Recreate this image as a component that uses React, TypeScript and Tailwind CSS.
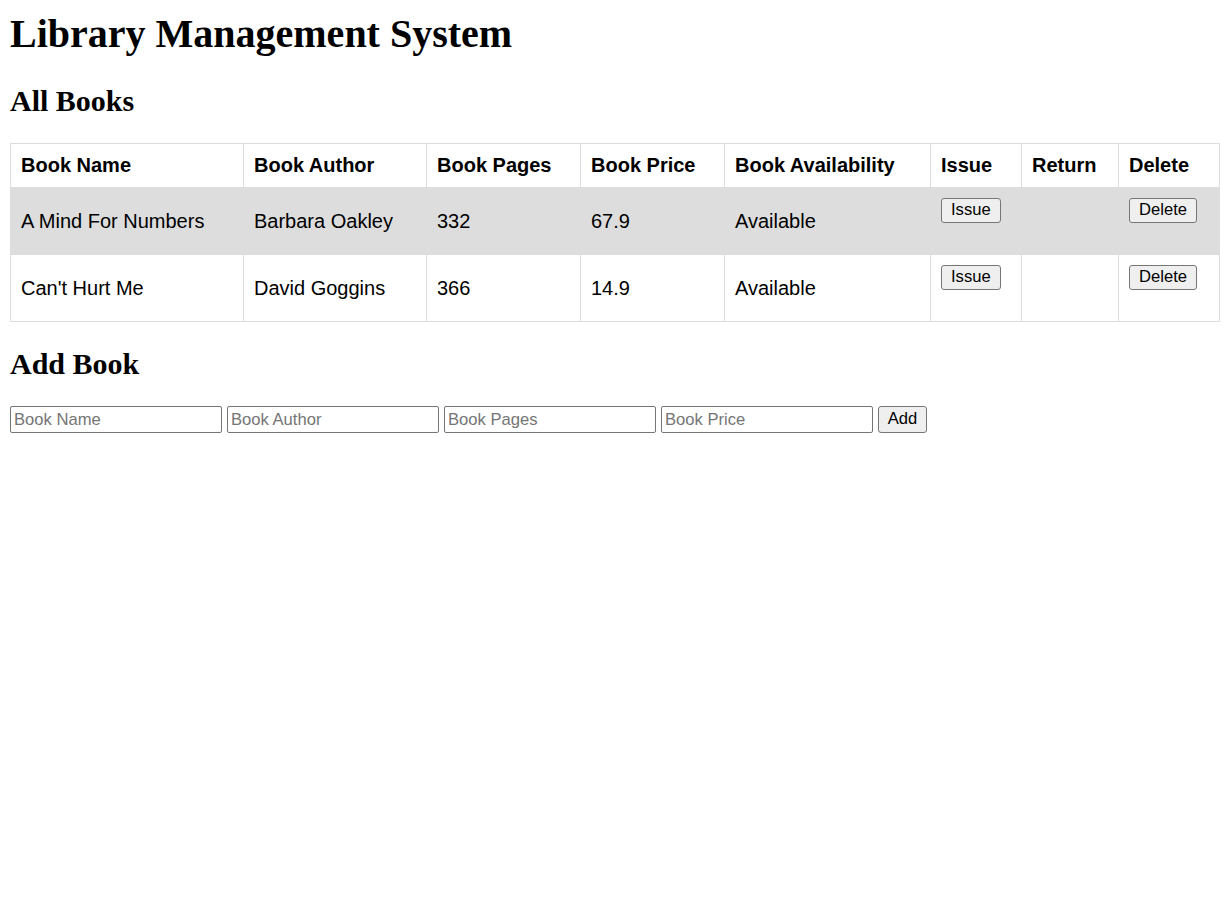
const books = [
  { name: "A Mind For Numbers", author: "Barbara Oakley", pages: 332, price: 67.9, available: true },
  { name: "Can't Hurt Me", author: "David Goggins", pages: 366, price: 14.9, available: true },
];

const headers = [
  { label: "Book Name", w: "w-[233px]" },
  { label: "Book Author", w: "w-[183px]" },
  { label: "Book Pages", w: "w-[154px]" },
  { label: "Book Price", w: "w-[144px]" },
  { label: "Book Availability", w: "w-[206px]" },
  { label: "Issue", w: "w-[91px]" },
  { label: "Return", w: "w-[97px]" },
  { label: "Delete", w: "w-[101px]" },
];

function SmallButton({ children }: { children: React.ReactNode }) {
  return (
    <button
      type="button"
      className="h-[25px] px-[9px] rounded-[3px] border border-[#767676] bg-[#efefef] text-[16.6px] leading-none text-black font-['Liberation_Sans',Arial,sans-serif]"
    >
      {children}
    </button>
  );
}

export default function App() {
  return (
    <div className="min-h-screen bg-white px-[10px] pt-[11px] pb-[10px] text-black font-['Liberation_Serif','Times_New_Roman',serif]">
      <h1 className="mt-0 mb-[27px] text-[40px] font-bold leading-[46px]">
        Library Management System
      </h1>

      <h2 className="mb-[25px] text-[30px] font-bold leading-[34px]">All Books</h2>

      <table className="w-[1210px] border-collapse font-['Liberation_Sans',Arial,sans-serif] text-[20px]">
        <thead>
          <tr>
            {headers.map((h) => (
              <th
                key={h.label}
                className={`${h.w} border border-[#ddd] px-[10px] py-[10px] text-left font-bold leading-[23px]`}
              >
                {h.label}
              </th>
            ))}
          </tr>
        </thead>
        <tbody>
          {books.map((b, i) => (
            <tr key={b.name} className={i % 2 === 0 ? "bg-[#ddd]" : "bg-white"}>
              <td className="h-[67px] border border-[#ddd] px-[10px] py-[10px] leading-[23px]">{b.name}</td>
              <td className="border border-[#ddd] px-[10px] py-[10px] leading-[23px]">{b.author}</td>
              <td className="border border-[#ddd] px-[10px] py-[10px] leading-[23px]">{b.pages}</td>
              <td className="border border-[#ddd] px-[10px] py-[10px] leading-[23px]">{b.price}</td>
              <td className="border border-[#ddd] px-[10px] py-[10px] leading-[23px]">
                {b.available ? "Available" : "Issued"}
              </td>
              <td className="border border-[#ddd] px-[10px] py-[10px] align-top leading-none">
                <SmallButton>Issue</SmallButton>
              </td>
              <td className="border border-[#ddd] px-[10px] py-[10px] align-top"></td>
              <td className="border border-[#ddd] px-[10px] py-[10px] align-top leading-none">
                <SmallButton>Delete</SmallButton>
              </td>
            </tr>
          ))}
        </tbody>
      </table>

      <h2 className="mt-[25px] mb-[25px] text-[30px] font-bold leading-[34px]">Add Book</h2>

      <form className="flex items-start gap-[5px] font-['Liberation_Sans',Arial,sans-serif]">
        {["Book Name", "Book Author", "Book Pages", "Book Price"].map((p) => (
          <input
            key={p}
            placeholder={p}
            className="h-[27px] w-[212px] border border-[#767676] rounded-[2px] px-[3px] text-[16.6px] text-black placeholder:text-[#757575] outline-none"
          />
        ))}
        <button
          type="button"
          className="h-[27px] w-[49px] rounded-[3px] border border-[#767676] bg-[#efefef] text-[16.6px] leading-none text-black"
        >
          Add
        </button>
      </form>
    </div>
  );
}
